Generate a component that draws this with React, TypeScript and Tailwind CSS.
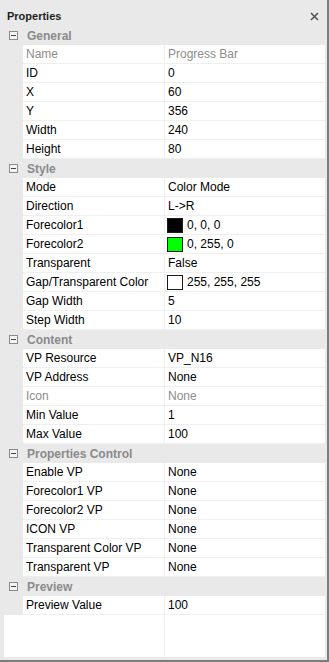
type Row = { name: string; value: string; swatch?: string; dim?: boolean };
type Group = { title: string; rows: Row[] };

const groups: Group[] = [
  {
    title: "General",
    rows: [
      { name: "Name", value: "Progress Bar", dim: true },
      { name: "ID", value: "0" },
      { name: "X", value: "60" },
      { name: "Y", value: "356" },
      { name: "Width", value: "240" },
      { name: "Height", value: "80" },
    ],
  },
  {
    title: "Style",
    rows: [
      { name: "Mode", value: "Color Mode" },
      { name: "Direction", value: "L->R" },
      { name: "Forecolor1", value: "0, 0, 0", swatch: "bg-black border-[#1a1a1a]" },
      { name: "Forecolor2", value: "0, 255, 0", swatch: "bg-[#00ff00] border-[#1a1a1a]" },
      { name: "Transparent", value: "False" },
      { name: "Gap/Transparent Color", value: "255, 255, 255", swatch: "bg-white border-[#1a1a1a]" },
      { name: "Gap Width", value: "5" },
      { name: "Step Width", value: "10" },
    ],
  },
  {
    title: "Content",
    rows: [
      { name: "VP Resource", value: "VP_N16" },
      { name: "VP Address", value: "None" },
      { name: "Icon", value: "None", dim: true },
      { name: "Min Value", value: "1" },
      { name: "Max Value", value: "100" },
    ],
  },
  {
    title: "Properties Control",
    rows: [
      { name: "Enable VP", value: "None" },
      { name: "Forecolor1 VP", value: "None" },
      { name: "Forecolor2 VP", value: "None" },
      { name: "ICON VP", value: "None" },
      { name: "Transparent Color VP", value: "None" },
      { name: "Transparent VP", value: "None" },
    ],
  },
  {
    title: "Preview",
    rows: [{ name: "Preview Value", value: "100" }],
  },
];

function MinusBox() {
  return (
    <div className="w-[9px] h-[9px] border border-[#8a8a8a] bg-[#f4f4f4] flex items-center justify-center">
      <div className="w-[5px] h-px bg-[#444]" />
    </div>
  );
}

export default function App() {
  return (
    <div
      className="w-[329px] h-[662px] flex flex-col bg-[#e9e9e9] border-r-2 border-b-2 border-[#7d7d7d] text-[12px] leading-none text-black"
      style={{ fontFamily: '"Liberation Sans", Arial, sans-serif' }}
    >
      <div className="h-[26px] flex items-center justify-between pt-[6px] pl-[7px] pr-[8px]">
        <span className="font-bold text-[11px] text-[#1e1e1e]">Properties</span>
        <svg width="9" height="9" viewBox="0 0 9 9">
          <path d="M1 1L8 8M8 1L1 8" stroke="#505050" strokeWidth="1.5" />
        </svg>
      </div>
      <div className="flex-1 ml-[4px] mr-[2px] mb-[3px] bg-white flex flex-col">
        {groups.map((g) => (
          <div key={g.title}>
            <div className="h-[19px] bg-[#e9e9e9] flex items-center">
              <div className="w-[19px] flex justify-center">
                <MinusBox />
              </div>
              <span className="pl-[4px] font-bold text-[#8a8a8a]">{g.title}</span>
            </div>
            {g.rows.map((r) => (
              <div key={r.name} className="h-[19px] flex">
                <div className="w-[19px] bg-[#e9e9e9]" />
                <div
                  className={`w-[141px] pl-[3px] flex items-center border-b border-[#efefef] ${
                    r.dim ? "text-[#8d8d8d]" : ""
                  }`}
                >
                  {r.name}
                </div>
                <div className="w-px bg-[#efefef]" />
                <div
                  className={`flex-1 flex items-center gap-[4px] border-b border-[#efefef] ${
                    r.swatch ? "pl-[2px]" : "pl-[3px]"
                  } ${r.dim ? "text-[#8d8d8d]" : ""}`}
                >
                  {r.swatch && <div className={`w-[16px] h-[15px] border ${r.swatch}`} />}
                  {r.value}
                </div>
              </div>
            ))}
          </div>
        ))}
        <div className="flex-1 flex">
          <div className="w-[160px]" />
          <div className="w-px bg-[#efefef]" />
        </div>
      </div>
    </div>
  );
}
